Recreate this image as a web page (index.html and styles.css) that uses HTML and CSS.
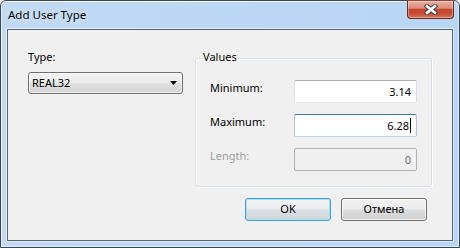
FILE: index.html
```html
<!DOCTYPE html>
<html>
<head>
<meta charset="utf-8">
<title>Add User Type</title>
<link rel="stylesheet" href="styles.css">
</head>
<body>
<div class="window">
  <div class="titlebar">
    <span class="title">Add User Type</span>
    <div class="close">
      <svg width="14" height="11" viewBox="0 0 14 11">
        <path d="M3 2.2 L11 8.8 M11 2.2 L3 8.8" stroke="#3b3f47" stroke-width="4.6" stroke-linecap="square" fill="none"/>
        <path d="M3 2.2 L11 8.8 M11 2.2 L3 8.8" stroke="#ffffff" stroke-width="2.6" stroke-linecap="square" fill="none"/>
      </svg>
    </div>
  </div>
  <div class="client">
    <div class="top">
      <div class="typecol">
        <div class="label">Type:</div>
        <div class="combo">
          <span>REAL32</span>
          <svg class="arrow" width="7" height="4" viewBox="0 0 7 4"><polygon points="0,0 7,0 3.5,4" fill="#000"/></svg>
        </div>
      </div>
      <fieldset class="group">
        <legend>Values</legend>
        <div class="rows">
          <div class="row"><span class="lbl">Minimum:</span><div class="field">3.14</div></div>
          <div class="row"><span class="lbl">Maximum:</span><div class="field focus">6.28<span class="caret"></span></div></div>
          <div class="row disabled"><span class="lbl">Length:</span><div class="field dis">0</div></div>
        </div>
      </fieldset>
    </div>
    <div class="buttons">
      <div class="btn default">OK</div>
      <div class="btn">Отмена</div>
    </div>
  </div>
</div>
</body>
</html>
```

FILE: styles.css
```css
* { box-sizing: border-box; }
html, body { margin: 0; background: #ffffff; }
body {
  font-family: "Noto Sans", "Segoe UI", sans-serif;
  font-size: 11px;
  color: #000;
}
.window {
  width: 460px;
  height: 248px;
  border: 1px solid #3a4652;
  border-radius: 6px 6px 0 0;
  background: linear-gradient(90deg, #c2daf3 0%, #bcd7f4 60%, #b8d6f6 100%);
  box-shadow: inset 0 1px 0 rgba(255,255,255,0.85), inset 1px 0 0 rgba(255,255,255,0.6), inset -1px 0 0 rgba(255,255,255,0.6), inset 0 -1px 0 rgba(255,255,255,0.5);
  padding: 0 6px 6px;
  display: flex;
  flex-direction: column;
}
.titlebar {
  height: 28px;
  display: flex;
  align-items: flex-start;
  justify-content: space-between;
}
.title {
  margin: 6px 0 0 1px;
  font-size: 11.5px;
  line-height: 15px;
  color: #000;
  text-shadow: 0 0 5px rgba(255,255,255,0.8);
}
.close {
  width: 47px;
  height: 19px;
  margin: -1px -1px 0 0;
  border: 1px solid #6a2a22;
  border-top-color: #8a4a40;
  border-radius: 0 0 4px 4px;
  background: linear-gradient(#eab0a2 0%, #dc8b78 42%, #c4452f 50%, #c84c34 75%, #d8765a 100%);
  box-shadow: inset 0 0 0 1px rgba(255,255,255,0.35);
  display: flex;
  align-items: center;
  justify-content: center;
}
.client {
  flex: 1;
  border: 1px solid #56636f;
  box-shadow: 0 0 0 1px rgba(255,255,255,0.55);
  background: #f0f0f0;
  padding: 19px 0 0 20px;
  display: flex;
  flex-direction: column;
}
.top {
  display: flex;
  align-items: flex-start;
  gap: 12px;
}
.typecol { width: 155px; }
.label { line-height: 16px; }
.combo {
  margin-top: 7px;
  height: 22px;
  border: 1px solid #707070;
  border-radius: 3px;
  background: linear-gradient(#f3f3f3 0%, #ececec 48%, #dfdfdf 52%, #d6d6d6 100%);
  box-shadow: inset 0 0 0 1px rgba(255,255,255,0.6);
  display: flex;
  align-items: center;
  justify-content: space-between;
  padding: 0 5px 0 3px;
  line-height: 20px;
}
.arrow { display: block; }
.group {
  width: 237px;
  margin: 0;
  padding: 0 0 15px 6px;
  border: 1px solid #d5dfe5;
  border-radius: 3px;
  box-shadow: inset 1px 1px 0 #ffffff, 1px 1px 0 #ffffff;
}
.group legend {
  padding: 0 1px 3px;
  line-height: 16px;
}
.rows {
  padding: 12px 0 0 8px;
  display: flex;
  flex-direction: column;
  gap: 11px;
}
.row {
  display: flex;
  align-items: flex-start;
}
.lbl {
  width: 84px;
  line-height: 16px;
}
.field {
  width: 123px;
  height: 23px;
  background: #ffffff;
  border: 1px solid;
  border-color: #abadb3 #dbdfe6 #e3e9ef #e2e3ea;
  border-radius: 2px;
  text-align: right;
  padding-right: 5px;
  line-height: 21px;
}
.field.focus {
  border-color: #3d7bad #a4c9e3 #b7d9ed #a4c9e3;
}
.caret {
  display: inline-block;
  width: 1px;
  height: 15px;
  background: #000;
  vertical-align: -3px;
  margin-left: 1px;
}
.disabled .lbl { color: #9d9d9d; }
.field.dis {
  background: #f0f0f0;
  border-color: #adb2b5;
  color: #6d6d6d;
}
.buttons {
  margin-top: 11px;
  padding-right: 25px;
  display: flex;
  justify-content: flex-end;
  gap: 10px;
}
.btn {
  width: 86px;
  height: 23px;
  border: 1px solid #707070;
  border-radius: 3px;
  background: linear-gradient(#f2f2f2 0%, #ebebeb 48%, #dddddd 52%, #cfcfcf 100%);
  box-shadow: inset 0 0 0 1px rgba(255,255,255,0.75);
  text-align: center;
  line-height: 20px;
}
.btn.default {
  border-color: #3c9fd8;
  box-shadow: inset 0 0 0 1px #a8e2fb;
  background: linear-gradient(#f2f4f5 0%, #eaeced 48%, #dce0e2 52%, #d0d4d6 100%);
}
```
